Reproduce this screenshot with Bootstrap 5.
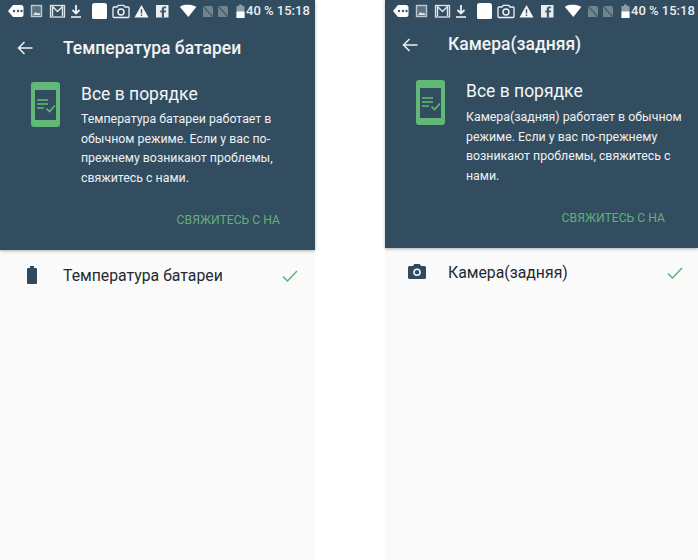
<!DOCTYPE html>
<html lang="ru">
<head>
<meta charset="utf-8">
<title>Диагностика</title>
<link href="https://cdn.jsdelivr.net/npm/bootstrap@5.3.0/dist/css/bootstrap.min.css" rel="stylesheet">
<style>
html,body{height:560px;overflow:hidden;background:#fff;}
body{font-family:Roboto,"Liberation Sans",sans-serif;}
.phone{height:560px;background:#fafafa;}
.phone-a{width:315px;}
.phone-b{width:313px;}
.hero{background:#334d60;color:#fff;box-shadow:0 1px 3px rgba(0,0,0,.3);}
.phone-a .hero{height:250px;}
.phone-b .hero{height:248px;}
.sbar{height:21px;padding:3px 8px 0 8px;font-size:13px;font-weight:500;color:#e9edf0;line-height:15px;white-space:nowrap;}
.sbar svg{display:block;flex:none;}
.tbar{height:54px;padding-left:17px;}
.phone-b .tbar{height:47px;}
.tbar-title{margin-left:30px;font-size:17.500px;font-weight:500;color:#f1f3f5;white-space:nowrap;}
.info{padding:0 18px 0 31px;}
.phone-b .info{padding-right:12px;}
.info svg{flex:none;margin-top:7px;}
.phone-b .info svg{margin-top:12px;}
.info-text{margin-left:21px;}
.info-h{font-size:17.5px;line-height:24px;margin:7px 0 4px;font-weight:400;color:#f4f6f7;}
.phone-b .info-h{margin:11px 0 5px;}
.info-p{font-size:12.350px;line-height:19.7px;margin:0;color:#eef1f3;}
.act{padding:0 35px 0 0;margin-top:23px;font-size:12.200px;line-height:16px;font-weight:400;color:#5fb274;}
.phone-b .act{padding-right:33px;}
.row-item{height:52px;padding:0 17px 0 27px;}
.phone-b .row-item{height:50px;padding:0 15px 0 23px;}
.row-ic{width:36px;flex:none;margin-top:-2px;}
.phone-b .row-ic{width:40px;margin-top:-3px;}
.row-label{font-size:15.800px;color:#222a30;white-space:nowrap;}
</style>
</head>
<body class="d-flex justify-content-between">
<svg width="0" height="0" class="d-none" aria-hidden="true">
<defs>
<symbol id="st" viewBox="0 0 300 16">
 <path d="M13 2h8a2.5 2.5 0 0 1 2.500 2.500v7A2.500 2.500 0 0 1 21 14h-8L8 8z" fill="#fff"/>
 <circle cx="14" cy="8" r="1.200" fill="#40596b"/><circle cx="18" cy="8" r="1.200" fill="#40596b"/><circle cx="21.500" cy="8" r="1.200" fill="#40596b"/>
 <rect x="31.500" y="2.500" width="10" height="11" fill="#5c7383" stroke="#bcc7ce" stroke-width="1.400"/>
 <path d="M33 12l2.500-3 2 1.500 1.500-1 1.500 2.500z" fill="#dfe5e8"/>
 <rect x="50.500" y="2.500" width="14" height="11.500" fill="none" stroke="#dfe4e8" stroke-width="1.300"/>
 <path d="M52.500 13V3.500l5 5 5-5V13" fill="none" stroke="#dfe4e8" stroke-width="1.500"/>
 <path d="M76 2v8M72.500 7l3.500 3.500L79.500 7" fill="none" stroke="#eef1f3" stroke-width="1.800"/>
 <path d="M71 14h10" stroke="#eef1f3" stroke-width="1.600"/>
 <rect x="92" y="0" width="15" height="16.500" rx="2.500" fill="#fff"/>
 <path d="M114 4h3l1.300-1.700h5.400L125 4h3a1 1 0 0 1 1 1v8.500a1 1 0 0 1-1 1h-14a1 1 0 0 1-1-1V5a1 1 0 0 1 1-1z" fill="none" stroke="#eef1f3" stroke-width="1.300"/>
 <circle cx="121" cy="9" r="3" fill="none" stroke="#eef1f3" stroke-width="1.500"/>
 <path d="M141.500 2l7 12.500h-14z" fill="#f4f6f7"/>
 <path d="M141.500 6v4.500M141.500 11.500v1.500" stroke="#40596b" stroke-width="1.400"/>
 <rect x="156" y="2" width="12.500" height="12.500" fill="#e9edf0"/>
 <path d="M164 14.500V9.500h1.800l.3-2H164V6.300c0-.7.300-1 1-1h1.100V3.500h-1.500c-1.900 0-2.800 1-2.800 2.700v1.300h-1.500v2h1.500v5z" fill="#40596b"/>
 <path d="M181 3c3 -1.600 9 -2 13.500 0c1.500 .7 1.800 .9 1.800 .9l-8 10.100-8.300-10.100z" fill="#fff"/>
 <path d="M203 3h8.500l1.500 1.500V14h-10z" fill="#71858f"/>
 <path d="M203 3l10 11" stroke="#40596b" stroke-width="1.200"/>
 <path d="M218 3h8.500l1.500 1.500V14h-10z" fill="#71858f"/>
 <path d="M218 3l10 11" stroke="#40596b" stroke-width="1.200"/>
 <path d="M239 1.500h3v1.500h2.500V15h-8V3h2.500z" fill="#8c9ca8"/>
 <rect x="236.500" y="8.500" width="8" height="6.500" fill="#fff"/>
</symbol>
</defs>
</svg>

<section class="phone phone-a d-flex flex-column">
 <header class="hero">
  <div class="sbar d-flex justify-content-between align-items-start">
   <svg width="238" height="16" viewBox="8 0 238 16"><use href="#st" x="0" y="0" width="300" height="16"/></svg>
   <span>40 % 15:18</span>
  </div>
  <div class="tbar d-flex align-items-center">
   <svg width="16" height="14" viewBox="0 0 16 14"><path d="M15.500 7H1.500M7.500 1L1.500 7l6 6" fill="none" stroke="#eef1f3" stroke-width="1.500"/></svg>
   <div class="tbar-title">Температура батареи</div>
  </div>
  <div class="info d-flex align-items-start">
   <svg width="29" height="45" viewBox="0 0 29 45"><rect width="29" height="45" rx="3" fill="#62b977"/><rect x="4" y="8" width="21" height="30" fill="#334d60"/><path d="M6 18h11M6 22h11M6 26h7" stroke="#62b977" stroke-width="1.500"/><path d="M15.500 26.500l3 3 5.500-6" fill="none" stroke="#62b977" stroke-width="1.600"/></svg>
   <div class="info-text flex-grow-1">
    <h1 class="info-h">Все в порядке</h1>
    <p class="info-p">Температура батареи работает в обычном режиме. Если у вас по-прежнему возникают проблемы, свяжитесь с нами.</p>
   </div>
  </div>
  <div class="act text-end">СВЯЖИТЕСЬ С НА</div>
 </header>
 <div class="row-item d-flex align-items-center">
  <div class="row-ic"><svg width="10" height="18" viewBox="0 0 10 18" class="d-block"><path d="M3 0h4v2h2a1 1 0 0 1 1 1v14a1 1 0 0 1-1 1H1a1 1 0 0 1-1-1V3a1 1 0 0 1 1-1h2z" fill="#2f4a5e"/></svg></div>
  <div class="row-label flex-grow-1">Температура батареи</div>
  <svg width="16" height="12" viewBox="0 0 16 12"><path d="M1 6.500l4.500 4.500L15 1" fill="none" stroke="#5fb274" stroke-width="1.500"/></svg>
 </div>
</section>

<section class="phone phone-b d-flex flex-column">
 <header class="hero">
  <div class="sbar d-flex justify-content-between align-items-start">
   <svg width="238" height="16" viewBox="8 0 238 16"><use href="#st" x="0" y="0" width="300" height="16"/></svg>
   <span>40 % 15:18</span>
  </div>
  <div class="tbar d-flex align-items-center">
   <svg width="16" height="14" viewBox="0 0 16 14"><path d="M15.500 7H1.500M7.500 1L1.500 7l6 6" fill="none" stroke="#eef1f3" stroke-width="1.500"/></svg>
   <div class="tbar-title">Камера(задняя)</div>
  </div>
  <div class="info d-flex align-items-start">
   <svg width="29" height="45" viewBox="0 0 29 45"><rect width="29" height="45" rx="3" fill="#62b977"/><rect x="4" y="8" width="21" height="30" fill="#334d60"/><path d="M6 18h11M6 22h11M6 26h7" stroke="#62b977" stroke-width="1.500"/><path d="M15.500 26.500l3 3 5.500-6" fill="none" stroke="#62b977" stroke-width="1.600"/></svg>
   <div class="info-text flex-grow-1">
    <h1 class="info-h">Все в порядке</h1>
    <p class="info-p">Камера(задняя) работает в обычном режиме. Если у вас по-прежнему возникают проблемы, свяжитесь с нами.</p>
   </div>
  </div>
  <div class="act text-end">СВЯЖИТЕСЬ С НА</div>
 </header>
 <div class="row-item d-flex align-items-center">
  <div class="row-ic"><svg width="18" height="15" viewBox="0 0 18 15" class="d-block"><path d="M1.500 2H5L6.300 0h5.400L13 2h3.500A1.500 1.500 0 0 1 18 3.500v10a1.500 1.500 0 0 1-1.500 1.500h-15A1.500 1.500 0 0 1 0 13.500v-10A1.500 1.500 0 0 1 1.500 2z" fill="#2f4a5e"/><circle cx="9" cy="8.300" r="3.800" fill="#fafafa"/><circle cx="9" cy="8.300" r="2.200" fill="#2f4a5e"/></svg></div>
  <div class="row-label flex-grow-1">Камера(задняя)</div>
  <svg width="16" height="12" viewBox="0 0 16 12"><path d="M1 6.500l4.500 4.500L15 1" fill="none" stroke="#5fb274" stroke-width="1.500"/></svg>
 </div>
</section>
<script src="https://cdn.jsdelivr.net/npm/bootstrap@5.3.0/dist/js/bootstrap.bundle.min.js"></script>
</body>
</html>
